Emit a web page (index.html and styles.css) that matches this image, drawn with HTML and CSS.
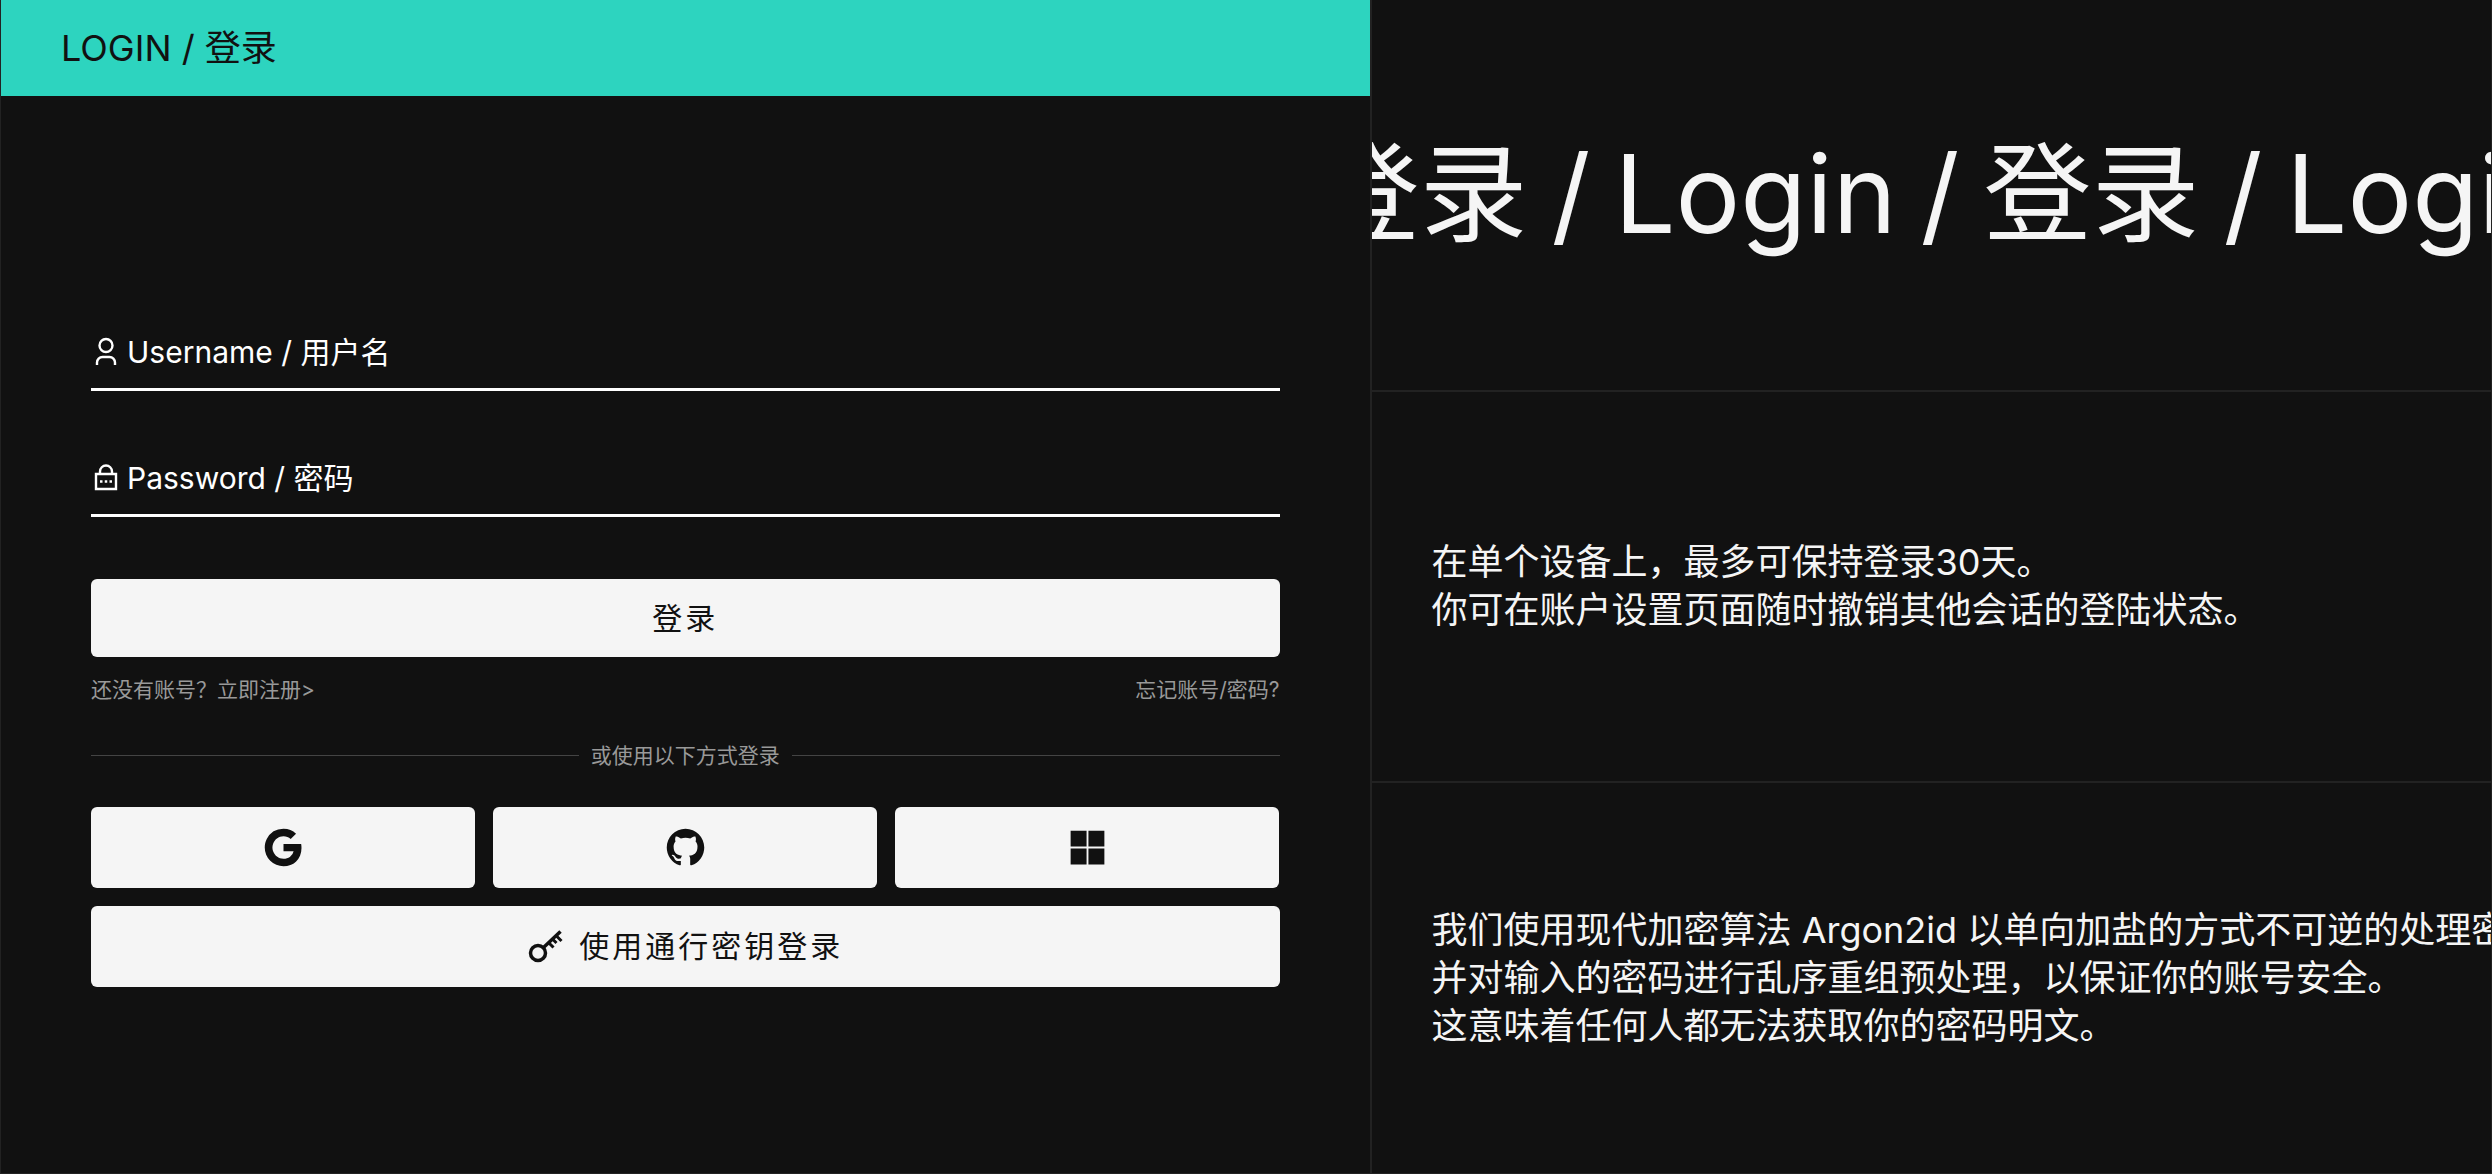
FILE: index.html
```html
<!DOCTYPE html>
<html lang="zh-CN">
<head>
<meta charset="utf-8">
<meta name="viewport" content="width=device-width, initial-scale=1">
<title>Login / 登录</title>
<link rel="stylesheet" href="styles.css">
</head>

<body>
<div class="page">
  <main class="login">
    <header class="login-header">
      <h1 class="login-title">LOGIN / 登录</h1>
    </header>

    <form class="login-form">
      <div class="field">
        <label class="field-label" for="username">
          <svg class="field-icon" viewBox="0 0 30 30" fill="none" stroke="currentColor" stroke-width="2.400">
            <circle cx="15" cy="8.500" r="6.500"/>
            <path d="M6 28v-2.500a5.500 5.500 0 0 1 5.500-5.500h7a5.500 5.500 0 0 1 5.500 5.500V28"/>
          </svg>
          Username / 用户名
        </label>
        <input class="field-input" id="username" type="text" autocomplete="username">
      </div>
      <div class="field">
        <label class="field-label" for="password">
          <svg class="field-icon" viewBox="0 0 30 30" fill="none" stroke="currentColor" stroke-width="2.400">
            <path d="M5 11h20v15H5z"/>
            <path d="M9 11V8.500a6 6 0 0 1 12 0V11"/>
            <path d="M9 18.500h2.500m2.250 0h2.500m2.250 0H21"/>
          </svg>
          Password / 密码
        </label>
        <input class="field-input" id="password" type="password" autocomplete="current-password">
      </div>

      <button class="btn btn-login" type="submit">登录</button>

      <div class="links">
        <a href="#register">还没有账号？立即注册&gt;</a>
        <a href="#forgot">忘记账号/密码?</a>
      </div>

      <div class="divider">或使用以下方式登录</div>

      <div class="providers">
        <button class="btn" type="button" aria-label="Google">
          <svg class="btn-icon" viewBox="0 0 24 24" fill="currentColor"><path d="M3.064 7.510A9.996 9.996 0 0 1 12 2c2.695 0 4.959.99 6.690 2.605l-2.867 2.868C14.786 6.482 13.468 5.977 12 5.977c-2.605 0-4.810 1.760-5.595 4.123-.2.6-.314 1.240-.314 1.900 0 .66.114 1.300.314 1.900.786 2.364 2.990 4.123 5.595 4.123 1.345 0 2.490-.355 3.386-.955a4.600 4.600 0 0 0 1.996-3.018H12v-3.868h9.418c.118.654.182 1.336.182 2.045 0 3.046-1.090 5.610-2.982 7.350C16.964 21.105 14.700 22 12 22A9.996 9.996 0 0 1 2 12c0-1.614.386-3.140 1.064-4.490z"/></svg>
        </button>
        <button class="btn" type="button" aria-label="GitHub">
          <svg class="btn-icon" viewBox="0 0 24 24" fill="currentColor"><path d="M12 2C6.475 2 2 6.475 2 12a9.994 9.994 0 0 0 6.838 9.488c.5.087.687-.213.687-.476 0-.237-.013-1.024-.013-1.862-2.512.463-3.162-.612-3.362-1.175-.113-.288-.6-1.175-1.025-1.413-.35-.187-.85-.65-.013-.662.788-.013 1.350.725 1.538 1.025.9 1.512 2.338 1.087 2.912.825.088-.65.35-1.087.638-1.337-2.225-.25-4.550-1.113-4.550-4.938 0-1.088.387-1.987 1.025-2.688-.1-.25-.45-1.275.1-2.650 0 0 .837-.262 2.750 1.026a9.280 9.280 0 0 1 2.500-.338c.85 0 1.700.112 2.500.337 1.912-1.300 2.750-1.024 2.750-1.024.55 1.375.2 2.400.1 2.650.637.7 1.025 1.587 1.025 2.687 0 3.838-2.337 4.688-4.562 4.938.362.312.675.912.675 1.850 0 1.337-.013 2.412-.013 2.750 0 .262.188.574.688.474A10.016 10.016 0 0 0 22 12c0-5.525-4.475-10-10-10z"/></svg>
        </button>
        <button class="btn" type="button" aria-label="Microsoft">
          <svg class="btn-icon" viewBox="0 0 24 24" fill="currentColor"><path d="M11.500 3v8.500H3V3h8.500zm0 18H3v-8.500h8.500V21zm1-18H21v8.500h-8.500V3zm8.500 9.500V21h-8.500v-8.500H21z"/></svg>
        </button>
      </div>

      <button class="btn" type="button">
        <svg class="btn-key" viewBox="0 0 36 36" fill="none" stroke="currentColor" stroke-width="3.500">
          <circle cx="11" cy="25" r="7.500"/>
          <path d="M16.500 19.500 33.500 3.500"/>
          <path d="M29 7.500l5.500 5.500M25.500 11l4 4M21.500 14.500l5 5" stroke-width="3"/>
        </svg>
        使用通行密钥登录
      </button>
    </form>
  </main>

  <aside class="info">
    <section class="info-row">
      <p class="marquee">
        <span>登录</span><span>/</span><span>Login</span><span>/</span>
        <span>登录</span><span>/</span><span>Login</span>
      </p>
    </section>
    <section class="info-row">
      <p class="info-text">在单个设备上，最多可保持登录30天。<br>你可在账户设置页面随时撤销其他会话的登陆状态。</p>
    </section>
    <section class="info-row">
      <p class="info-text">我们使用现代加密算法 Argon2id 以单向加盐的方式不可逆的处理密码，<br>并对输入的密码进行乱序重组预处理，以保证你的账号安全。<br>这意味着任何人都无法获取你的密码明文。</p>
    </section>
  </aside>
</div>
</body>

</html>
```

FILE: styles.css
```css
* {
  box-sizing: border-box;
  margin: 0;
}

body {
  background: #111;
  color: #f5f5f5;
  font-family: Inter, "Noto Sans CJK SC", sans-serif;
}

.page {
  display: grid;
  grid-template-columns: calc(55% - 1px) 1fr;
  min-height: 100vh;
  border: 1px solid #222;
  border-top: 0;
}

/* left: login form */
.login {
  display: flex;
  flex-direction: column;
}

.login-header {
  padding: 24px 60px;
  background: #2dd4bf;
  color: #111;
}

.login-title {
  font-size: 36px;
  font-weight: 400;
  line-height: 48px;
}

.login-form {
  flex: 1;
  display: flex;
  flex-direction: column;
  justify-content: center;
  gap: 18px;
  padding: 0 90px;
}

.field {
  position: relative;
  display: flex;
}

.field-label {
  position: absolute;
  left: 0;
  bottom: 18px;
  display: flex;
  align-items: center;
  gap: 6px;
  color: #fff;
  font-size: 30px;
  line-height: 42px;
}

.field-icon {
  width: 30px;
  height: 30px;
}

.field-input {
  flex: 1;
  height: 108px;
  padding: 48px 6px 0;
  border: 0;
  border-bottom: 3px solid #fff;
  background: transparent;
  color: #fff;
  font: inherit;
  font-size: 30px;
  outline: none;
}

.btn {
  display: flex;
  align-items: center;
  justify-content: center;
  gap: 16px;
  height: 81px;
  padding: 0;
  border: 0;
  border-radius: 6px;
  background: #f5f5f5;
  color: #111;
  font: inherit;
  font-size: 30px;
  line-height: 42px;
  letter-spacing: 3px;
  cursor: pointer;
}

.btn-login {
  height: 78px;
  margin-top: 44px;
}

.btn-icon {
  width: 45px;
  height: 45px;
}

.btn-key {
  width: 36px;
  height: 36px;
}

.links,
.divider {
  color: #999;
  font-size: 21px;
  line-height: 30px;
}

.links {
  display: flex;
  justify-content: space-between;
}

.links a {
  color: inherit;
  text-decoration: none;
}

.divider {
  display: flex;
  align-items: center;
  gap: 12px;
  margin: 18px 0;
}

.divider::before,
.divider::after {
  content: "";
  flex: 1;
  height: 1px;
  background: #444;
}

.providers {
  display: grid;
  grid-template-columns: repeat(3, 1fr);
  gap: 18px;
}

/* right: notes, the 2px gaps show through as lines */
.info {
  display: grid;
  grid-template-rows: repeat(3, 1fr);
  gap: 2px;
  border-left: 2px solid #222;
  background: #222;
  overflow: hidden;
}

.info-row {
  display: flex;
  align-items: center;
  min-width: 0;
  background: #111;
  overflow: hidden;
}

.marquee {
  display: flex;
  align-items: baseline;
  gap: 24px;
  margin-left: -60px;
  padding-bottom: 18px;
  font-size: 108px;
  white-space: nowrap;
}

.info-text {
  padding: 0 60px;
  font-size: 36px;
  line-height: 48px;
  white-space: nowrap;
}
```
